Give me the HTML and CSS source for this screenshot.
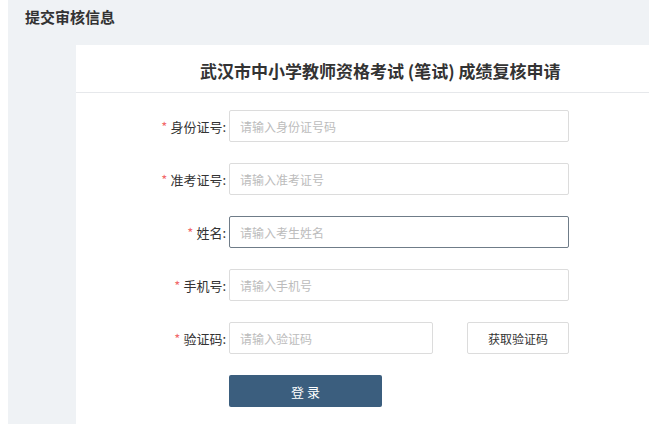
FILE: index.html
```html
<!DOCTYPE html>
<html lang="zh">
<head>
<meta charset="utf-8">
<title>提交审核信息</title>
<link rel="stylesheet" href="styles.css">
</head>
<body>
<div class="page">
  <div class="page-title">提交审核信息</div>
  <div class="card">
    <div class="card-head">武汉市中小学教师资格考试 (笔试) 成绩复核申请</div>
    <form class="form">
      <div class="row">
        <label class="label"><span class="req">*</span>身份证号:</label>
        <input class="input" type="text" placeholder="请输入身份证号码">
      </div>
      <div class="row">
        <label class="label"><span class="req">*</span>准考证号:</label>
        <input class="input" type="text" placeholder="请输入准考证号">
      </div>
      <div class="row">
        <label class="label"><span class="req">*</span>姓名:</label>
        <input class="input focus" type="text" placeholder="请输入考生姓名">
      </div>
      <div class="row">
        <label class="label"><span class="req">*</span>手机号:</label>
        <input class="input" type="text" placeholder="请输入手机号">
      </div>
      <div class="row">
        <label class="label"><span class="req">*</span>验证码:</label>
        <input class="input short" type="text" placeholder="请输入验证码">
        <button class="code-btn" type="button">获取验证码</button>
      </div>
      <div class="row">
        <span class="label"></span>
        <button class="submit" type="button">登 录</button>
      </div>
    </form>
  </div>
</div>
</body>
</html>
```
FILE: styles.css
```css
html, body {
  margin: 0;
  padding: 0;
  height: 100%;
  background: #fff;
}
body {
  padding-left: 8px;
  box-sizing: border-box;
  font-family: "Noto Sans CJK SC", "Liberation Sans", sans-serif;
  color: #333;
  overflow: hidden;
}
.page {
  background: #eff2f5;
  height: 100%;
  display: flex;
  flex-direction: column;
}
.page-title {
  font-size: 15px;
  font-weight: bold;
  color: #333;
  line-height: 20px;
  padding: 7px 0 0 17px;
  height: 38px;
}
.card {
  margin-left: 68px;
  background: #fff;
  flex: 1;
}
.card-head {
  height: 47px;
  line-height: 52px;
  border-bottom: 1px solid #e6e8eb;
  padding-left: 124px;
  font-size: 17px;
  font-weight: bold;
  color: #333;
  white-space: nowrap;
}
.form {
  padding-top: 17px;
  display: flex;
  flex-direction: column;
  gap: 21px;
}
.row {
  display: flex;
  align-items: center;
  height: 32px;
}
.label {
  width: 150px;
  margin-right: 3px;
  text-align: right;
  font-size: 13px;
  color: #333;
  flex-shrink: 0;
}
.req {
  color: #f26a6a;
  margin-right: 3px;
}
.input {
  box-sizing: border-box;
  width: 340px;
  height: 32px;
  border: 1px solid #dcdcdc;
  border-radius: 2px;
  padding: 0 10px;
  font-size: 12px;
  font-family: inherit;
  outline: none;
  color: #333;
}
.input::placeholder {
  color: #bcbcbc;
}
.input.focus {
  border-color: #6f7c88;
}
.input.short {
  width: 204px;
}
.code-btn {
  box-sizing: border-box;
  margin-left: 34px;
  width: 102px;
  height: 32px;
  background: #fff;
  border: 1px solid #dcdcdc;
  border-radius: 2px;
  font-size: 12px;
  font-family: inherit;
  color: #333;
}
.submit {
  box-sizing: border-box;
  width: 153px;
  height: 32px;
  background: #3b5e7e;
  border: none;
  border-radius: 2px;
  color: #fff;
  font-size: 13px;
  font-family: inherit;
}
```
